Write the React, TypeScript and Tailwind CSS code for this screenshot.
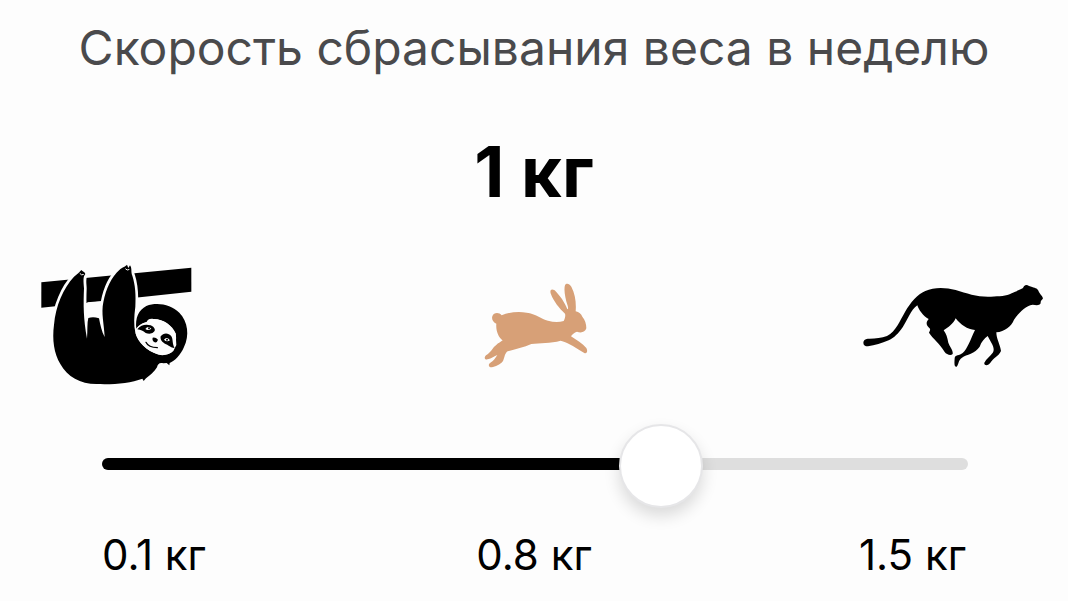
import { useState } from "react";

const MIN = 0.1;
const MAX = 1.5;

function Sloth() {
  return (
    <svg className="h-[122px] w-[152px]" viewBox="30 27 456 366" aria-hidden="true">
      <path d="M34 82 L484 38 V110 L34 158 Z" fill="#000" />
      <path
        d="M172 142 L220 138 L224 246 L215 190 L175 188 L171 251 Z"
        fill="#fdfdfd"
      />
      <path
        d="M154 45 C158 50 164 50 166 57 C158 66 161 80 162 100 C160 150 160 190 171 251 C173 225 171 204 175 189 Q190 184 207 190 C211 210 215 230 224 246 C222 205 213 175 220 142 C228 100 245 65 268 45 C277 36 288 34 291 29 L295 39 L300 31 C307 42 302 50 307 62 C316 90 318 120 316 155 C312 185 311 210 316 232 C322 262 350 288 386 299 C402 303 419 298 430 288 L439 270 L437 236 C420 205 395 191 368 193 C358 191 354 194 350 201 C336 205 325 213 319 222 C315 188 326 165 349 153 C382 140 423 149 448 173 C474 200 479 241 462 276 C452 300 434 318 419 324 L418 331 L410 324 L400 325 C389 321 383 327 381 337 C373 351 359 362 348 370 L341 378 L337 371 C301 385 250 389 199 387 C151 387 112 365 91 327 C72 295 66 254 72 209 C77 153 100 99 132 65 Q146 55 154 45 Z"
        fill="#000"
        stroke="#fdfdfd"
        strokeWidth="16"
        paintOrder="stroke"
      />
      <path
        d="M317 224 C323 212 337 204 350 201 C354 194 359 190 370 192 C399 191 427 211 437 235 C440 253 438 270 431 284 C419 301 399 301 382 297 C349 287 327 261 317 236 Z"
        fill="#fdfdfd"
      />
      <path
        d="M322 223 C332 209 348 207 362 211 C374 216 379 227 370 232 C363 238 354 236 347 234 C339 227 333 225 322 223 Z M392 244 C400 233 415 232 424 244 C430 254 426 266 434 280 C421 277 419 273 408 268 C396 262 390 254 392 244 Z"
        fill="#000"
      />
      <path d="M368 248 Q377 246 384 254 Q381 264 374 262 Q365 256 368 248 Z" fill="#000" />
      <path d="M348 262 C354 275 364 278 382 278" fill="none" stroke="#000" strokeWidth="4" strokeLinecap="round" />
      <path
        d="M346 222 Q354 211 364 221 Q354 228 346 222 Z M402 254 Q410 243 420 256 Q410 263 402 254 Z"
        fill="#fdfdfd"
      />
      <circle cx="357" cy="220" r="3" fill="#000" />
      <circle cx="411" cy="254" r="3" fill="#000" />
      <path d="M150 56 Q154 62 160 59 M287 42 Q291 48 297 44" fill="none" stroke="#fdfdfd" strokeWidth="3" strokeLinecap="round" />
    </svg>
  );
}

function Rabbit() {
  return (
    <svg className="h-[88px] w-[110px]" viewBox="12 18 330 264" fill="#d7a077" aria-hidden="true">
      <path d="M52 124 C56 112 72 111 80 121 C102 111 132 109 155 113 C182 116 199 132 219 137 C236 142 252 142 266 138 C270 131 272 122 270 116 C253 101 236 79 228 58 C223 45 229 40 239 46 C254 61 270 83 277 103 C281 100 279 97 278 92 C270 68 266 43 270 31 C274 23 283 26 289 35 C301 58 304 84 302 109 C312 111 319 117 322 125 C330 134 334 146 334 160 C331 172 317 175 306 170 C298 173 291 178 288 184 C304 195 323 206 334 219 C339 228 336 237 328 234 C304 220 284 204 257 197 C226 206 195 203 169 207 C148 217 119 223 98 229 C89 235 89 248 84 258 C75 270 61 274 50 277 C40 277 39 268 46 263 C55 258 61 250 67 240 C58 244 50 250 38 253 C29 255 26 247 33 241 C47 234 52 219 63 211 C70 203 78 201 83 196 C70 187 62 167 64 146 C55 142 49 134 52 124 Z" />
    </svg>
  );
}

function Cheetah() {
  return (
    <svg className="h-[86px] w-[182px]" viewBox="21 36 546 258" fill="#000" aria-hidden="true">
      <path d="M26 214 C28 207 36 206 44 206 C62 206 80 204 96 198 C124 183 134 153 150 126 C168 96 187 73 211 63 C237 51 271 52 302 60 C337 71 370 82 408 80 C433 79 454 79 470 70 C485 63 492 60 504 54 C506 46 514 41 522 48 C536 53 544 53 549 60 C552 70 562 77 564 85 C561 91 556 92 557 100 C552 108 542 105 533 104 C511 108 493 127 477 149 C469 169 449 185 424 187 C424 207 436 225 438 243 C431 259 415 263 405 280 C397 289 386 286 388 278 C394 267 405 260 412 250 C419 242 416 230 409 218 L398 198 C388 205 379 216 374 230 C360 251 335 253 321 263 C309 271 312 282 305 290 C297 291 298 279 299 265 C299 254 314 257 323 249 C338 236 346 209 360 180 C336 178 318 165 302 145 C295 161 281 172 266 181 C274 191 277 203 280 218 C284 230 295 240 293 252 C287 259 274 253 269 246 C254 219 234 207 222 188 C224 182 226 181 225 176 C214 167 211 158 221 147 C204 138 191 119 187 106 C167 120 158 149 143 172 C130 191 118 203 101 211 C80 220 60 225 39 229 C28 229 23 223 26 214 Z" />
    </svg>
  );
}

export default function App() {
  const [rate, setRate] = useState(1);
  const fraction = (rate - MIN) / (MAX - MIN);

  return (
    <main className="min-h-screen bg-[#fdfdfd] font-['Inter',sans-serif] text-black">
      <h1 id="rate-title" className="pt-4 text-center text-[48px] leading-[64px] text-[#4a4a4c]">
        Скорость сбрасывания веса в неделю
      </h1>
      <output htmlFor="rate" className="mt-[52px] block text-center text-[70px] leading-[80px] font-bold">
        {rate} кг
      </output>
      <div className="mt-[52px] grid grid-cols-3 items-center px-6">
        <div className="pl-4">
          <Sloth />
        </div>
        <div className="flex justify-center">
          <Rabbit />
        </div>
        <div className="flex justify-end">
          <Cheetah />
        </div>
      </div>
      <div className="mr-[50px] ml-[52px] mt-[39px] grid items-center">
        <div className="col-start-1 row-start-1 mx-[50px] mb-[5px] h-3 overflow-hidden rounded-full bg-[#dedede]">
          <div className="h-full bg-black" style={{ width: `calc(${fraction} * (100% + 18px) - 9px)` }} />
        </div>
        <input
          id="rate"
          type="range"
          aria-labelledby="rate-title"
          min={MIN}
          max={MAX}
          step={0.1}
          value={rate}
          onChange={(event) => setRate(Number(event.target.value))}
          className="col-start-1 row-start-1 h-[82px] w-full cursor-pointer appearance-none bg-transparent [&::-webkit-slider-thumb]:size-[84px] [&::-webkit-slider-thumb]:appearance-none [&::-webkit-slider-thumb]:rounded-full [&::-webkit-slider-thumb]:border-2 [&::-webkit-slider-thumb]:border-[#e6e6e8] [&::-webkit-slider-thumb]:bg-white [&::-webkit-slider-thumb]:shadow-[0_8px_16px_rgba(0,0,0,0.14)]"
        />
      </div>
      <div className="mt-5 grid grid-cols-3 px-[102px] text-[42px] leading-[56px]">
        <span>0.1 кг</span>
        <span className="text-center">0.8 кг</span>
        <span className="text-right">1.5 кг</span>
      </div>
    </main>
  );
}
